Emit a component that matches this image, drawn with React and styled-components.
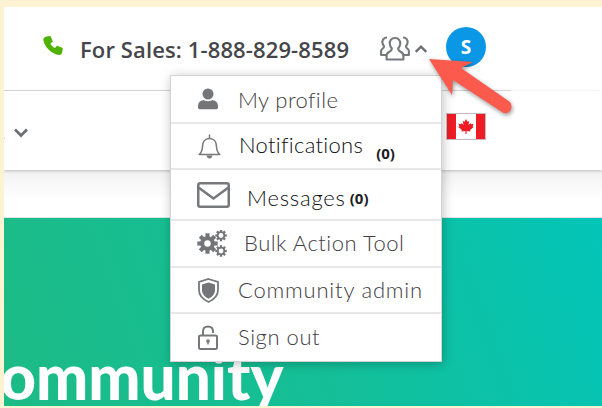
import styled, { createGlobalStyle } from "styled-components";

const GlobalStyle = createGlobalStyle`
  html, body {
    margin: 0;
    padding: 0;
    background: #fdf3d3;
  }
`;

const Page = styled.div`
  position: relative;
  width: 602px;
  height: 408px;
  padding: 7px 0 2px 4px;
  box-sizing: border-box;
  overflow: hidden;
  display: flex;
  flex-direction: column;
  font-family: "Lato", "Liberation Sans", sans-serif;
  background: #fdf3d3;
`;

const Screen = styled.div`
  flex: 1;
  display: flex;
  flex-direction: column;
  background: #fff;
  overflow: hidden;
`;

const TopBar = styled.div`
  height: 84px;
  width: 507px;
  box-sizing: border-box;
  border-bottom: 1px solid #dcdcdc;
  display: flex;
  align-items: center;
  padding: 0 0 0 39px;
  flex-shrink: 0;
`;

const PhoneSlot = styled.span`
  display: flex;
  margin-top: -5px;
`;

const SalesText = styled.span`
  margin-left: 16px;
  font-family: "Open Sans", sans-serif;
  font-size: 22px;
  font-weight: 600;
  letter-spacing: 0.12px;
  color: #45464a;
  white-space: nowrap;
`;

const Actions = styled.div`
  display: flex;
  align-items: center;
  margin-left: 31px;
`;

const GroupSlot = styled.span`
  display: flex;
  margin: 0 4px 0 0;
`;

const Avatar = styled.div`
  width: 40px;
  height: 40px;
  margin-left: 18px;
  margin-top: -4px;
  border-radius: 50%;
  background: #0a97e6;
  color: #fff;
  display: flex;
  align-items: center;
  justify-content: center;
  font-family: "Open Sans", sans-serif;
  font-weight: 700;
  font-size: 19px;
`;

const NavRow = styled.div`
  height: 79px;
  flex-shrink: 0;
  display: flex;
  align-items: center;
  box-sizing: border-box;
  box-shadow: 0 1px 3px rgba(0, 0, 0, 0.22);
  position: relative;
`;

const NavLabel = styled.span`
  margin: 6px 0 0 -7px;
  font-size: 18px;
  color: #6f7075;
`;

const NavChevron = styled.span`
  display: flex;
  margin: 6px 0 0 8px;
`;

const FlagSlot = styled.span`
  display: flex;
  margin: -9px 116px 0 auto;
`;

const Fade = styled.div`
  height: 47px;
  flex-shrink: 0;
  background: linear-gradient(#f1f1f1, #fff 60%);
`;

const Hero = styled.div`
  flex: 1;
  overflow: hidden;
  display: flex;
  align-items: flex-end;
  background: linear-gradient(70deg, #1dbb85 0%, #14bf98 50%, #03c5b8 100%);
  border-top: 1px solid #e4e4e4;
`;

const HeroTitle = styled.h1`
  margin: 0 0 -3px -44px;
  font-family: "Lato", sans-serif;
  font-weight: 900;
  font-size: 62px;
  line-height: 66px;
  color: #fff;
  white-space: nowrap;
`;

const Menu = styled.div`
  position: absolute;
  left: 170px;
  top: 75px;
  width: 272px;
  background: #fff;
  border: 1px solid #d4d4d4;
  box-sizing: border-box;
  box-shadow: 1px 2px 10px rgba(0, 0, 0, 0.25);
`;

const MenuRow = styled.div`
  display: flex;
  align-items: center;
  height: ${(p) => p.$height}px;
  padding-left: 26px;
  box-sizing: border-box;
  &:not(:last-child) {
    border-bottom: 2px solid #e8e8e8;
  }
`;

const IconSlot = styled.span`
  width: ${(p) => p.$width || 22}px;
  display: flex;
  justify-content: center;
  flex-shrink: 0;
`;

const MenuLabel = styled.span`
  margin-left: ${(p) => p.$gap}px;
  margin-top: ${(p) => p.$nudge || 0}px;
  font-size: 22px;
  font-weight: 300;
  letter-spacing: ${(p) => p.$spacing}px;
  color: ${(p) => (p.$dark ? "#0e0e10" : "#3f4044")};
  white-space: nowrap;
`;

const Count = styled.span`
  margin-left: ${(p) => p.$gap}px;
  margin-top: ${(p) => p.$drop}px;
  font-family: "Open Sans", sans-serif;
  font-size: 15px;
  font-weight: 700;
  color: #1d1d1f;
`;

const ArrowLayer = styled.svg`
  position: absolute;
  left: 420px;
  top: 50px;
  filter: drop-shadow(1px 2px 2px rgba(0, 0, 0, 0.4));
`;

function PhoneIcon() {
  return (
    <svg width="21" height="20" viewBox="0 0 21 20">
      <path
        d="M3.500.5 7.500 0l2.300 5.500-2.400 2c.8 2 2.500 3.700 4.600 4.500l2-2.200 5.800 2.200-.6 4.200c-.3 1.800-1.800 3-3.500 2.700C8 17.500 1.500 11 .3 4 0 2.300 1.600.8 3.500.5Z"
        fill="#4fb200"
      />
    </svg>
  );
}

function GroupIcon() {
  return (
    <svg width="30" height="25" viewBox="0 0 30 25" fill="#fff" stroke="#77787c" strokeWidth="2.100" strokeLinejoin="round">
      <path d="M7 1.500c-3.300 0-5 2.500-4.500 5.500.2 1.400.8 2.500 1.600 3.300 0 1.600-1 2.300-2 2.900-.8.500-1 1.300-1 2.300V19h8" />
      <path d="M23 1.500c3.300 0 5 2.500 4.500 5.500-.2 1.400-.8 2.500-1.600 3.300 0 1.600 1 2.300 2 2.900.8.500 1 1.300 1 2.300V19h-8" />
      <path d="M15 2c-3.700 0-5.700 2.700-5.200 6.200.3 1.900 1 3.300 2 4.200 0 2-1.200 2.800-2.800 3.600-1.600.8-2.400 1.900-2.400 3.700v3.800h16.800v-3.800c0-1.800-.8-2.900-2.400-3.700-1.600-.8-2.800-1.600-2.800-3.600 1-.9 1.700-2.300 2-4.200C20.700 4.700 18.700 2 15 2Z" />
    </svg>
  );
}

function Chevron({ up, size = 16, color = "#6f7075" }) {
  return (
    <svg width={size} height={size * 0.65} viewBox="0 0 16 10.400" fill="none" stroke={color} strokeWidth="2.800">
      <path d={up ? "M2 9 8 3l6 6" : "M2 1.500l6 6 6-6"} />
    </svg>
  );
}

function ProfileIcon() {
  return (
    <svg width="20" height="22" viewBox="0 0 20 22" fill="#747579">
      <circle cx="10" cy="6" r="5.500" />
      <path d="M0 18c0-3.500 2-5.500 5.500-6 1.500 1.500 7.500 1.500 9 0 3.500.5 5.500 2.500 5.500 6v1.500c0 1-.8 1.800-2 1.800H2c-1.200 0-2-.8-2-1.800Z" />
    </svg>
  );
}

function BellIcon() {
  return (
    <svg width="23" height="26" viewBox="0 0 23 26" fill="none" stroke="#77787c" strokeWidth="1.500">
      <path d="M1.200 21.500c2.300-2 3.200-4 3.300-8 .1-4.500 2.500-8 7-8s6.900 3.500 7 8c.1 4 1 6 3.300 8Z" strokeLinejoin="round" />
      <path d="M11.500 1.500v4" />
      <path d="M8.500 22.500c.3 2 1.500 3 3 3s2.700-1 3-3Z" fill="#77787c" stroke="none" />
    </svg>
  );
}

function EnvelopeIcon() {
  return (
    <svg width="33" height="26" viewBox="0 0 33 26" fill="none" stroke="#77787c" strokeWidth="2.500">
      <rect x="1.250" y="1.250" width="30.500" height="23.500" rx="2" />
      <path d="M1.500 5.500 16.500 16.500 31.500 5.500" />
    </svg>
  );
}

function Gear({ x, y, r, hole }) {
  const teeth = [0, 45, 90, 135];
  return (
    <g transform={`translate(${x} ${y})`}>
      {teeth.map((a) => (
        <rect key={a} x={-r * 0.24} y={-r * 1.2} width={r * 0.48} height={r * 2.4} transform={`rotate(${a})`} fill="#747579" />
      ))}
      <circle r={r * 0.86} fill="#747579" />
      <circle r={r * hole} fill="#fff" />
    </g>
  );
}

function GearsIcon() {
  return (
    <svg width="30" height="27" viewBox="0 0 30 27">
      <Gear x={10.500} y={13.500} r={8.500} hole={0.38} />
      <Gear x={24} y={5.500} r={4.800} hole={0.5} />
      <Gear x={24} y={21} r={4.800} hole={0.5} />
    </svg>
  );
}

function ShieldIcon() {
  return (
    <svg width="21" height="25" viewBox="0 0 21 25">
      <path d="M10.500 1 20 3.800v8.200c0 5.500-4 9.500-9.500 12C5 21.500 1 17.500 1 12V3.800Z" fill="none" stroke="#77787c" strokeWidth="1.800" />
      <path d="M10.500 4.500 17 6.500V12c0 4-2.800 6.800-6.500 8.800C6.800 18.800 4 16 4 12V6.500Z" fill="#747579" />
    </svg>
  );
}

function LockIcon() {
  return (
    <svg width="20" height="25" viewBox="0 0 20 25" fill="none" stroke="#77787c" strokeWidth="2">
      <path d="M5 11V6.500C5 3.300 7 1.500 10 1.500s5 1.800 5 5V8" />
      <rect x="1" y="10.500" width="18" height="13.500" rx="1.500" />
      <circle cx="10" cy="16" r="1.800" fill="#77787c" stroke="none" />
      <path d="M10 16v3.500" strokeWidth="1.500" />
    </svg>
  );
}

function CanadaFlag() {
  return (
    <svg width="40" height="27" viewBox="0 0 40 27">
      <rect width="40" height="27" fill="#fff" />
      <rect width="10" height="27" fill="#ee1c25" />
      <rect x="30" width="10" height="27" fill="#ee1c25" />
      <path
        d="M20 6l1.500 2.700 1.700-.8-.7 4 2-2 .5 1.300 2.500-.4-.8 2.700 1 .6-3.600 3 .4 1.400-3.900-.5V21h-1.200v-3l-3.900.5.4-1.400-3.600-3 1-.6-.8-2.700 2.500.4.500-1.300 2 2-.7-4 1.700.8Z"
        fill="#ee1c25"
      />
      <rect x=".5" y=".5" width="39" height="26" fill="none" stroke="#c9b8c0" strokeWidth="1" />
    </svg>
  );
}

function App() {
  return (
    <Page>
      <GlobalStyle />
      <Screen>
        <TopBar>
          <PhoneSlot><PhoneIcon /></PhoneSlot>
          <SalesText>For Sales: 1-888-829-8589</SalesText>
          <Actions>
            <GroupSlot><GroupIcon /></GroupSlot>
            <Chevron up size={14} />
            <Avatar>S</Avatar>
          </Actions>
        </TopBar>
        <NavRow>
          <NavLabel>s</NavLabel>
          <NavChevron><Chevron size={16} /></NavChevron>
          <FlagSlot><CanadaFlag /></FlagSlot>
        </NavRow>
        <Fade />
        <Hero>
          <HeroTitle>Community</HeroTitle>
        </Hero>
      </Screen>

      <Menu>
        <MenuRow $height={48}>
          <IconSlot><ProfileIcon /></IconSlot>
          <MenuLabel $gap={19} $spacing={0.4}>My profile</MenuLabel>
        </MenuRow>
        <MenuRow $height={46}>
          <IconSlot $width={24}><BellIcon /></IconSlot>
          <MenuLabel $dark $gap={18} $nudge={-4} $spacing={0.3}>Notifications</MenuLabel>
          <Count $gap={13} $drop={14}>(0)</Count>
        </MenuRow>
        <MenuRow $height={51}>
          <IconSlot $width={33}><EnvelopeIcon /></IconSlot>
          <MenuLabel $dark $gap={17} $nudge={6} $spacing={0.8}>Messages</MenuLabel>
          <Count $gap={4} $drop={6}>(0)</Count>
        </MenuRow>
        <MenuRow $height={47}>
          <IconSlot $width={30}><GearsIcon /></IconSlot>
          <MenuLabel $gap={17} $nudge={-2} $spacing={0.5}>Bulk Action Tool</MenuLabel>
        </MenuRow>
        <MenuRow $height={46}>
          <IconSlot><ShieldIcon /></IconSlot>
          <MenuLabel $gap={19} $nudge={-2} $spacing={0.8}>Community admin</MenuLabel>
        </MenuRow>
        <MenuRow $height={47}>
          <IconSlot><LockIcon /></IconSlot>
          <MenuLabel $gap={19} $nudge={-3} $spacing={0.55}>Sign out</MenuLabel>
        </MenuRow>
      </Menu>

      <ArrowLayer width="100" height="70" viewBox="0 0 100 70">
        <path d="M9 9 L53 12 L41 18 L90 52 Q93 57 90 61 Q86 65 82 62 L33 30 L32 45 Z" fill="#fb5a4d" />
      </ArrowLayer>
    </Page>
  );
}

export default App;
